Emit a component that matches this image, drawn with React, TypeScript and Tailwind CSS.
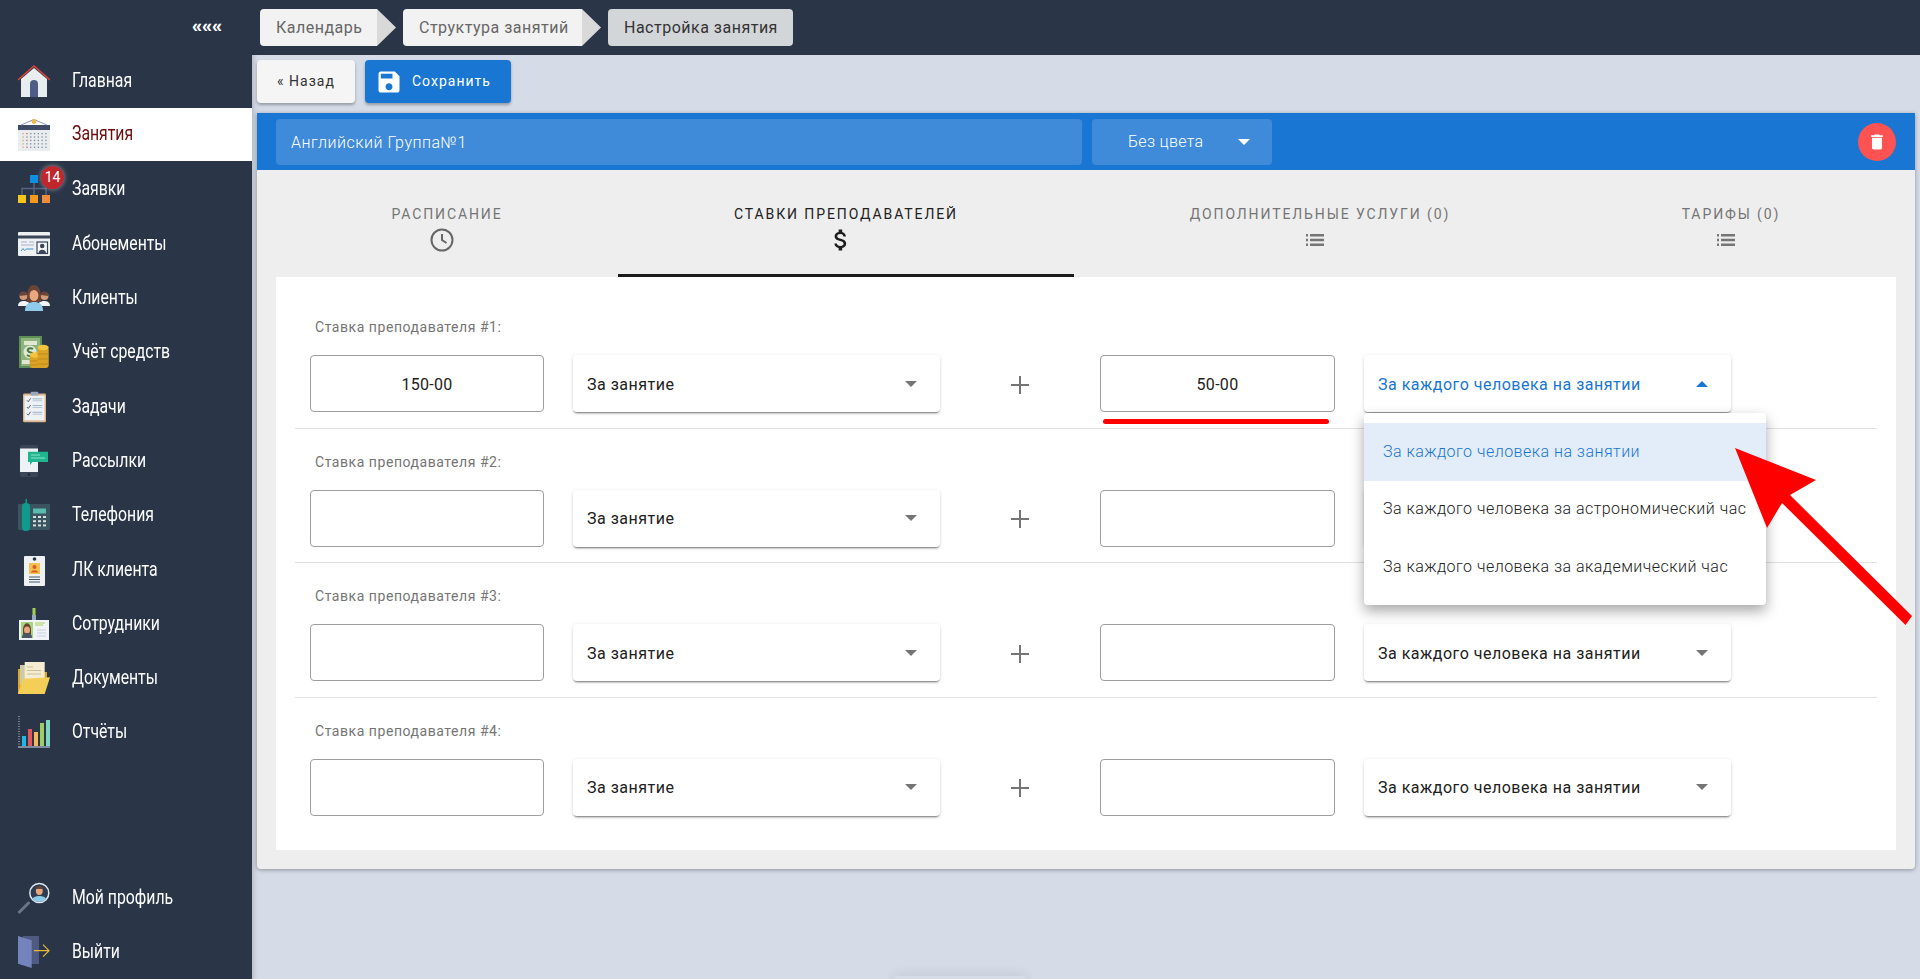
// ── Sidebar icons (flat illustrations, drawn on a 32px wide box) ─

function HomeIcon() {
  return (
    <svg width="32" height="32" viewBox="0 0 32 32">
      <path d="M3 14 16 3l13 11v18H3z" fill="#e8eef0" />
      <path d="M0 15 16 1l16 14" fill="none" stroke="#e0453a" strokeWidth="1.4" />
      <path d="M12 32V19a4 4 0 0 1 8 0v13z" fill="#4f5d86" />
    </svg>
  );
}

function CalendarIcon() {
  const dots = [];
  for (let r = 0; r < 5; r++) {
    for (let c = 0; c < 7; c++) {
      dots.push(
        <rect
          key={`${r}-${c}`}
          x={4.5 + c * 3.8}
          y={15 + r * 3.4}
          width="1.3"
          height="1.3"
          fill={c === 0 ? "#e8a05a" : c === 1 && r % 2 === 0 ? "#e05a5a" : "#7f8a9a"}
        />,
      );
    }
  }
  return (
    <svg width="32" height="33" viewBox="0 0 32 33">
      <rect x="0" y="11" width="32" height="22" fill="#e9edf0" />
      <rect x="0" y="7" width="32" height="5" fill="#3f4a66" />
      <path d="M3 7 16 1.500l13 5.500" fill="none" stroke="#8b93c4" strokeWidth="1" />
      <circle cx="16" cy="3.500" r="2.400" fill="#f2b84b" />
      {dots}
    </svg>
  );
}

function OrdersIcon() {
  return (
    <svg width="32" height="28" viewBox="0 0 32 28">
      <rect x="12" y="0" width="8" height="8" fill="#0b8fe0" />
      <path d="M16 8v12M4 20v-6.500h24V20" fill="none" stroke="#56657f" strokeWidth="1.400" />
      <rect x="0" y="20" width="8" height="8" fill="#f5c518" />
      <rect x="12" y="20" width="8" height="8" fill="#f49a1a" />
      <rect x="24" y="20" width="8" height="8" fill="#f08a3c" />
    </svg>
  );
}

function TicketIcon() {
  return (
    <svg width="32" height="24" viewBox="0 0 32 24">
      <rect x="0" y="0" width="32" height="24" rx="1" fill="#eef1f4" />
      <rect x="0" y="3.500" width="32" height="3" fill="#3a4658" />
      <path d="M3 10h6M11 10h5M3 13h13" stroke="#aab3bf" strokeWidth="1" />
      <path d="M3 19l2-2.500 1.500 2 2-1.500h7" fill="none" stroke="#3f8fd0" strokeWidth="1" />
      <rect x="19" y="10" width="10.500" height="11.500" fill="#f5f7f9" stroke="#3a4658" strokeWidth="1.200" />
      <circle cx="24.200" cy="14" r="2.300" fill="#3a4658" />
      <path d="M20.500 21c0-4.500 7.500-4.500 7.500 0z" fill="#3a4658" />
    </svg>
  );
}

function ClientsIcon() {
  return (
    <svg width="32" height="26" viewBox="0 0 32 26">
      <circle cx="5.500" cy="11" r="4" fill="#d79a73" />
      <path d="M1.500 11a4 4 0 0 1 8-1z" fill="#6b4436" />
      <path d="M0 21c0-4 3-5 6-5s6 1 6 5z" fill="#f1f3f5" />
      <circle cx="26.500" cy="11" r="4" fill="#d79a73" />
      <path d="M22.500 10a4 4 0 0 1 8 1z" fill="#6b4436" />
      <path d="M20 21c0-4 3-5 6-5s6 1 6 5z" fill="#f1f3f5" />
      <path d="M9.500 9c0-12 13-12 13 0 0 5 1 8 1 8H8.500s1-3 1-8z" fill="#6b4436" />
      <ellipse cx="16" cy="10.500" rx="4.400" ry="5.600" fill="#e8a77e" />
      <path d="M7 26c0-7 4-9 9-9s9 2 9 9z" fill="#8fcbe8" />
    </svg>
  );
}

function MoneyIcon() {
  return (
    <svg width="30" height="32" viewBox="0 0 30 32">
      <rect x="0" y="0" width="23" height="32" fill="#5f8f55" />
      <rect x="2" y="2" width="19" height="28" fill="#8fb37e" />
      <path d="M5 5h13v4H5zM3 24h10v4H3z" fill="#dfe9d2" />
      <circle cx="11" cy="16" r="6.500" fill="#dfe9d2" />
      <path d="M14 13c-3-2-6 0-5 2s5 1 5 3-3 3-6 1" fill="none" stroke="#4d7a46" strokeWidth="2" />
      <rect x="10.700" y="18" width="11" height="14" rx="3" fill="#dba325" />
      <ellipse cx="16.200" cy="19" rx="5.500" ry="2.800" fill="#f4c33f" />
      <rect x="18.700" y="11" width="11" height="21" rx="3" fill="#dba325" />
      <ellipse cx="24.200" cy="11.500" rx="5.500" ry="2.800" fill="#f4c33f" />
      <path d="M18.700 18h11M18.700 23h11M18.700 28h11M10.700 25h8M10.700 29h8" stroke="#b98518" strokeWidth="0.800" />
    </svg>
  );
}

function TasksIcon() {
  return (
    <svg width="23" height="32" viewBox="0 0 24 32">
      <rect x="0" y="2" width="24" height="30" rx="1.500" fill="#d9b48c" />
      <rect x="1.500" y="4" width="21" height="26" fill="#eef2f4" />
      <rect x="8" y="0" width="8" height="4" rx="1" fill="#9aa8bd" />
      {[9, 16, 23].map((y) => (
        <g key={y}>
          <path d={`M4 ${y}l1.500 1.500L8 ${y - 2}`} fill="none" stroke="#4a5668" strokeWidth="1" />
          <rect x="10" y={y - 2} width="10" height="1" fill="#9db0c6" />
          <rect x="10" y={y} width="10" height="1" fill="#b6c4d4" />
        </g>
      ))}
    </svg>
  );
}

function MailingIcon() {
  return (
    <svg width="28" height="32" viewBox="0 0 28 32">
      <rect x="0" y="0" width="18" height="32" rx="2" fill="#3a4658" />
      <rect x="0" y="3.500" width="18" height="23.500" fill="#eef2f4" />
      <circle cx="9" cy="29.500" r="1.200" fill="#1d2533" />
      <path d="M8 6.700h20V17H12.500L10 20v-3H8z" fill="#1fb58f" />
      <path d="M11 10h9M11 13h14" stroke="#8fe3cf" strokeWidth="1" />
    </svg>
  );
}

function PhoneIcon() {
  const keys = [];
  for (let r = 0; r < 3; r++) {
    for (let c = 0; c < 3; c++) {
      keys.push(<rect key={`${r}-${c}`} x={15 + c * 5} y={17 + r * 4.200} width="3" height="2" fill="#d5dfe0" />);
    }
  }
  return (
    <svg width="32" height="32" viewBox="0 0 32 32">
      <rect x="0" y="5" width="32" height="26" rx="1" fill="#3b5560" />
      <rect x="15" y="9.500" width="13" height="5" fill="#5bbcae" />
      <rect x="7.500" y="0" width="1.500" height="6" fill="#0f9a8c" />
      <rect x="4" y="4" width="8" height="28" rx="3.500" fill="#0f9a8c" />
      {keys}
    </svg>
  );
}

function CabinetIcon() {
  return (
    <svg width="21" height="32" viewBox="0 0 21 32">
      <rect x="0" y="2" width="21" height="30" rx="1" fill="#eef2f4" />
      <circle cx="10.500" cy="5" r="1.800" fill="#2a3547" />
      <rect x="5" y="9" width="11" height="11" fill="#f4c04e" />
      <circle cx="10.500" cy="13" r="2" fill="#d95c20" />
      <path d="M7 18.500c0-3 7-3 7 0z" fill="#d95c20" />
      <path d="M5 23h11M5 25.500h11M5 28h11" stroke="#4a5668" strokeWidth="1" />
    </svg>
  );
}

function StaffIcon() {
  return (
    <svg width="30" height="32" viewBox="0 0 30 32">
      <rect x="13.500" y="0" width="3" height="8" fill="#a4cf56" />
      <rect x="13" y="7" width="4" height="5" fill="#9aa8bd" />
      <rect x="0" y="12" width="30" height="20" fill="#f0f4f8" />
      <rect x="2" y="14" width="12" height="16" fill="#a6d67c" />
      <path d="M4 22c0-9 8-9 8 0v4H4z" fill="#6b4436" />
      <ellipse cx="8" cy="22" rx="3" ry="3.500" fill="#e8a77e" />
      <path d="M3 30c0-4 2-5 5-5s5 1 5 5z" fill="#4a5668" />
      <path d="M16 15h10M16 17h8" stroke="#a4cf56" strokeWidth="1" />
      <path d="M18 22h9M18 25h9M18 28h9" stroke="#c5cfdd" strokeWidth="1.200" />
    </svg>
  );
}

function DocsIcon() {
  return (
    <svg width="32" height="32" viewBox="0 0 32 32">
      <path d="M0 7h5v25H0zM26 10h3v8h-3z" fill="#d9a92c" />
      <path d="M2 3h5v20H2z" fill="#cfc9a8" />
      <rect x="6.700" y="0" width="20" height="22" fill="#f4edd2" />
      <path d="M9 5h6M9 8.500h14M9 12h14" stroke="#c9bf9c" strokeWidth="1" />
      <path d="M5 16.700 32 15.300 26.700 32H0z" fill="#f3cf58" />
    </svg>
  );
}

function ReportsIcon() {
  return (
    <svg width="32" height="32" viewBox="0 0 32 32">
      <path d="M1 0v30" stroke="#c5cfdd" strokeWidth="1" strokeDasharray="1 1.500" />
      <rect x="0" y="30" width="32" height="2" fill="#7e8ba0" />
      <rect x="4" y="20" width="4" height="10" fill="#1fb6ea" />
      <rect x="10" y="13" width="4" height="17" fill="#e0575a" />
      <rect x="16" y="16" width="4" height="14" fill="#f4b860" />
      <rect x="22" y="7" width="4" height="23" fill="#9ccf63" />
      <rect x="28" y="4" width="4" height="26" fill="#7fd6c2" />
    </svg>
  );
}

function ProfileIcon() {
  return (
    <svg width="32" height="32" viewBox="0 0 32 32">
      <path d="M1.500 30 10.500 21" stroke="#6d7686" strokeWidth="3" strokeLinecap="round" />
      <circle cx="21.300" cy="11" r="9.500" fill="#2f3d52" stroke="#dfe5ec" strokeWidth="1.500" />
      <path d="M14.500 17c1-4 12.500-4 13.500 0a9 9 0 0 1-13.500 0z" fill="#8fcbe8" />
      <ellipse cx="21.300" cy="9" rx="3.400" ry="4" fill="#e8a77e" />
      <path d="M17.800 7c0-4 7-4 7 0z" fill="#6b4436" />
    </svg>
  );
}

function LogoutIcon() {
  return (
    <svg width="32" height="32" viewBox="0 0 32 32">
      <rect x="5" y="0" width="16" height="28" fill="#4f5a80" />
      <path d="M0 0 13.700 4.300V32L0 27.700z" fill="#7583bd" />
      <path d="M16 14.700h15M25 8.700l6 6-6 6" fill="none" stroke="#e8b93a" strokeWidth="1.200" />
    </svg>
  );
}

// ── Material glyphs ─────────────────────────────────────────────

function ListIcon() {
  return (
    <svg width="24" height="24" viewBox="0 0 24 24" fill="#757575">
      <path d="M3 6h2v2.500H3zM7 6h14v2.500H7zM3 10.800h2v2.500H3zM7 10.800h14v2.500H7zM3 15.500h2V18H3zM7 15.500h14V18H7z" />
    </svg>
  );
}

function Caret({ up, color }: { up?: boolean; color: string }) {
  return (
    <svg width="12" height="6" viewBox="0 0 12 6" style={{ fill: color }}>
      <path d={up ? "M0 6 6 0l6 6z" : "M0 0l6 6 6-6z"} />
    </svg>
  );
}

// ── Sidebar ─────────────────────────────────────────────────────

const NAV = [
  { label: "Главная", icon: <HomeIcon /> },
  { label: "Занятия", icon: <CalendarIcon />, active: true },
  { label: "Заявки", icon: <OrdersIcon />, badge: 14 },
  { label: "Абонементы", icon: <TicketIcon /> },
  { label: "Клиенты", icon: <ClientsIcon /> },
  { label: "Учёт средств", icon: <MoneyIcon /> },
  { label: "Задачи", icon: <TasksIcon /> },
  { label: "Рассылки", icon: <MailingIcon /> },
  { label: "Телефония", icon: <PhoneIcon /> },
  { label: "ЛК клиента", icon: <CabinetIcon /> },
  { label: "Сотрудники", icon: <StaffIcon /> },
  { label: "Документы", icon: <DocsIcon /> },
  { label: "Отчёты", icon: <ReportsIcon /> },
];

const NAV_BOTTOM = [
  { label: "Мой профиль", icon: <ProfileIcon /> },
  { label: "Выйти", icon: <LogoutIcon /> },
];

type NavEntry = { label: string; icon: React.ReactNode; active?: boolean; badge?: number };

function NavItem({ item }: { item: NavEntry }) {
  return (
    <div
      className={`relative flex items-center pl-[18px] text-[20px] ${
        item.active ? "mb-[1.300px] h-[53px] bg-white text-[#6e0b0b]" : "h-[54.300px] text-white"
      }`}
    >
      <span className="flex w-[32px] justify-center">{item.icon}</span>
      <span className="ml-[22px] origin-left scale-x-[0.79] whitespace-nowrap pb-[2px]">{item.label}</span>
      {item.badge && (
        <span className="absolute left-[41px] top-[4px] flex h-[23px] w-[23px] items-center justify-center rounded-full bg-[#c0272d] text-[14px] text-white shadow-[0_0_5px_rgba(255,255,255,0.5)]">
          {item.badge}
        </span>
      )}
    </div>
  );
}

function Sidebar() {
  return (
    <aside className="flex h-[979px] w-[252px] shrink-0 flex-col bg-[#2a3547]">
      <div className="flex h-[53.700px] shrink-0 justify-end pr-[30px] pt-[13px] text-[18px] font-bold leading-[26px] text-white font-['Liberation_Sans',sans-serif]">
        «««
      </div>
      {NAV.map((item) => (
        <NavItem key={item.label} item={item} />
      ))}
      <div className="mt-auto">
        {NAV_BOTTOM.map((item) => (
          <NavItem key={item.label} item={item} />
        ))}
      </div>
    </aside>
  );
}

// ── Breadcrumbs ─────────────────────────────────────────────────

function Crumb({ label, width }: { label: string; width: string }) {
  return (
    <div className="flex h-[37px] items-stretch">
      <div className={`flex items-center rounded-l-[4px] bg-[#f2f2f2] pl-[16px] text-[16px] tracking-[0.5px] text-[#666] ${width}`}>
        {label}
      </div>
      <svg width="19" height="37" viewBox="0 0 19 37" className="block">
        <path d="M0 0l19 18.500L0 37z" fill="#d9d9d9" />
      </svg>
    </div>
  );
}

function Breadcrumbs() {
  return (
    <div className="flex h-[55px] shrink-0 items-start gap-[7px] bg-[#2a3547] pl-[8px] pt-[9px]">
      <Crumb label="Календарь" width="w-[117px]" />
      <Crumb label="Структура занятий" width="w-[179px]" />
      <div className="flex h-[37px] w-[185px] items-center rounded-[4px] bg-[#d3d6d9] pl-[16px] text-[16px] tracking-[0.5px] text-[#333]">
        Настройка занятия
      </div>
    </div>
  );
}

// ── Form parts ──────────────────────────────────────────────────

const TABS = [
  { label: "Расписание", w: "w-[342px]" },
  { label: "Ставки преподавателей", w: "w-[456px]", active: true },
  { label: "Дополнительные услуги (0)", w: "w-[492px]" },
  { label: "Тарифы (0)", w: "w-[330px]" },
];

function TabIcon({ label }: { label: string }) {
  if (label === "Расписание") {
    return (
      <svg width="24" height="24" viewBox="0 0 24 24" fill="none" stroke="#666" strokeWidth="2">
        <circle cx="12" cy="12" r="10.500" />
        <path d="M12 6v6l4.500 3" />
      </svg>
    );
  }
  if (label === "Ставки преподавателей") {
    return (
      <svg width="28" height="28" viewBox="0 0 24 24" fill="#1c1c1c">
        <path d="M11.800 10.900c-2.270-.59-3-1.200-3-2.150 0-1.090 1.010-1.850 2.700-1.850 1.780 0 2.440.85 2.500 2.100h2.210c-.07-1.720-1.120-3.300-3.210-3.810V3h-3v2.160c-1.940.42-3.500 1.680-3.500 3.610 0 2.310 1.910 3.460 4.700 4.130 2.500.6 3 1.480 3 2.410 0 .69-.49 1.790-2.700 1.790-2.060 0-2.870-.92-2.980-2.100h-2.200c.12 2.190 1.760 3.420 3.680 3.830V21h3v-2.150c1.950-.37 3.500-1.500 3.500-3.550 0-2.840-2.430-3.810-4.700-4.400z" />
      </svg>
    );
  }
  return <ListIcon />;
}

function Select({ label, width, open }: { label?: string; width: string; open?: boolean }) {
  return (
    <div
      className={`flex h-[57px] items-center justify-between rounded-[4px] bg-white pl-[14px] pr-[23px] text-[16px] tracking-[0.5px] shadow-[0_2px_2px_-1px_rgba(0,0,0,0.5),0_1px_4px_rgba(0,0,0,0.12)] ${width} ${
        open ? "text-[#1976d2]" : "text-[#212121]"
      }`}
    >
      <span className="pt-[2px]">{label}</span>
      <Caret up={open} color={open ? "#1976d2" : "#757575"} />
    </div>
  );
}

function Amount({ value, width }: { value?: string; width: string }) {
  return (
    <div className={`flex h-[57px] items-center justify-center rounded-[4px] border border-[#9e9e9e] bg-white pt-[2px] text-[16px] tracking-[0.3px] text-[#212121] ${width}`}>
      {value}
    </div>
  );
}

const RATES = [
  { n: 1, base: "150-00", extra: "50-00", open: true, unit: "За каждого человека на занятии" },
  // row 2's select sits under the open menu, its text is never visible
  { n: 2, base: "", extra: "" },
  { n: 3, base: "", extra: "", unit: "За каждого человека на занятии" },
  { n: 4, base: "", extra: "", unit: "За каждого человека на занятии", last: true },
];

type RateRowProps = { n: number; base: string; extra: string; unit?: string; open?: boolean; last?: boolean };

function RateRow({ n, base, extra, unit, open, last }: RateRowProps) {
  return (
    <div className={`relative h-[134.500px] pl-[15px] pt-[23px] ${last ? "" : "border-b border-[#e0e0e0]"}`}>
      <div className="h-[20px] pl-[5px] text-[14px] leading-[20px] tracking-[0.55px] text-[#757575]">Ставка преподавателя #{n}:</div>
      <div className="mt-[18px] flex items-center">
        <Amount value={base} width="w-[234px]" />
        <div className="ml-[29px]">
          <Select label="За занятие" width="w-[367px]" />
        </div>
        <div className="flex w-[160px] justify-center pt-[2px]">
          <svg width="18" height="18" viewBox="0 0 18 18">
            <path d="M9 0v18M0 9h18" stroke="#757575" strokeWidth="2" />
          </svg>
        </div>
        <Amount value={extra} width="w-[235px]" />
        <div className="ml-[29px]">
          <Select label={unit} width="w-[367px]" open={open} />
        </div>
      </div>
      {open && (
        <>
          <div className="absolute left-[808px] top-[125px] h-[5px] w-[226px] rounded-full bg-[#ff0000] blur-[0.5px]" />
          <div className="absolute left-[1069px] top-[119px] z-10 h-[192px] w-[402px] rounded-[4px] bg-white pt-[10px] text-[16px] font-light tracking-[0.47px] shadow-[0_6px_14px_rgba(0,0,0,0.35)]">
            <div className="flex h-[57.500px] items-center bg-[#e3edf9] pl-[19px] text-[#1976d2]">За каждого человека на занятии</div>
            <div className="flex h-[57.500px] items-center pl-[19px] text-[#212121]">За каждого человека за астрономический час</div>
            <div className="flex h-[57.500px] items-center pl-[19px] text-[#212121]">За каждого человека за академический час</div>
          </div>
        </>
      )}
    </div>
  );
}

// ── Page ────────────────────────────────────────────────────────

export default function App() {
  return (
    <div className="relative flex h-[979px] w-[1920px] overflow-hidden bg-[#d5dce8] font-['Roboto',sans-serif]">
      <Sidebar />
      <main className="flex min-w-0 flex-1 flex-col">
        <Breadcrumbs />
        <div className="flex-1 pl-[5px] pr-[5px] shadow-[inset_6px_0_5px_-4px_rgba(0,0,0,0.15)]">
          <div className="flex h-[58px] items-start gap-[10px] pt-[5px]">
            <button className="flex h-[43px] w-[98px] items-center justify-center rounded-[4px] bg-[#f5f5f5] text-[14px] tracking-[1px] text-[#333] shadow-[0_2px_3px_rgba(0,0,0,0.3)]">
              « Назад
            </button>
            <button className="flex h-[43px] w-[146px] items-center gap-[9px] rounded-[4px] bg-[#1976d2] pl-[10px] text-[14px] tracking-[1px] text-white shadow-[0_2px_3px_rgba(0,0,0,0.3)]">
              <svg width="28" height="28" viewBox="0 0 24 24" fill="#fff">
                <path d="M17 3H5c-1.110 0-2 .9-2 2v14c0 1.100.89 2 2 2h14c1.100 0 2-.9 2-2V7l-4-4zm-5 16c-1.660 0-3-1.340-3-3s1.340-3 3-3 3 1.340 3 3-1.340 3-3 3zm3-10H5V5h10v4z" />
              </svg>
              Сохранить
            </button>
          </div>

          <section className="h-[756px] rounded-b-[4px] bg-[#eeeeee] shadow-[0_1px_4px_rgba(0,0,0,0.35)]">
            <div className="flex h-[57px] items-center bg-[#1976d2] pl-[19px] pr-[19px]">
              <div className="flex h-[46px] w-[806px] items-center rounded-[4px] bg-[#3f8ad9] pl-[15px] pt-[2px] text-[16px] font-light tracking-[0.5px] text-white">
                Английский Группа№1
              </div>
              <div className="ml-[10px] flex h-[46px] w-[180px] items-center rounded-[4px] bg-[#3f8ad9] pl-[36px] pr-[22px] text-[16px] font-light tracking-[0.3px] text-white">
                <span className="flex-1">Без цвета</span>
                <Caret color="#fff" />
              </div>
              <button className="ml-auto flex h-[38px] w-[38px] items-center justify-center rounded-full bg-[#ff5252]">
                <svg width="20" height="20" viewBox="0 0 24 24" fill="#fff">
                  <path d="M6 19c0 1.100.9 2 2 2h8c1.100 0 2-.9 2-2V7H6v12zM19 4h-3.500l-1-1h-5l-1 1H5v2h14V4z" />
                </svg>
              </button>
            </div>

            <div className="ml-[19px] flex h-[107px] w-[1620px]">
              {TABS.map((t) => (
                <div
                  key={t.label}
                  className={`flex flex-col items-center pt-[34px] text-[14px] uppercase tracking-[1.900px] ${t.w} ${
                    t.active ? "border-b-[3px] border-[#1c1c1c] text-[#212121]" : "text-[#757575]"
                  }`}
                >
                  <span className="leading-[20px]">{t.label}</span>
                  <span className="mt-[4px] flex h-[24px] items-center pr-[10px]">
                    <TabIcon label={t.label} />
                  </span>
                </div>
              ))}
            </div>

            <div className="ml-[19px] h-[573px] w-[1620px] bg-white px-[19px] pt-[17px]">
              {RATES.map((r) => (
                <RateRow key={r.n} {...r} />
              ))}
            </div>
          </section>
        </div>
      </main>

      {/* scrolled-off element peeking in at the bottom edge */}
      <div className="absolute left-[895px] top-[976px] h-[10px] w-[130px] bg-[#d5dce8] shadow-[0_0_14px_rgba(0,0,0,0.12)]" />

      <svg className="pointer-events-none absolute left-[1725px] top-[440px] z-20" width="195" height="195" viewBox="1725 440 195 195">
        <path d="M1735 448 1816 480 1790 495 1912 616 1905.500 625 1782 503 1767 528z" fill="#ff0000" />
      </svg>
    </div>
  );
}
